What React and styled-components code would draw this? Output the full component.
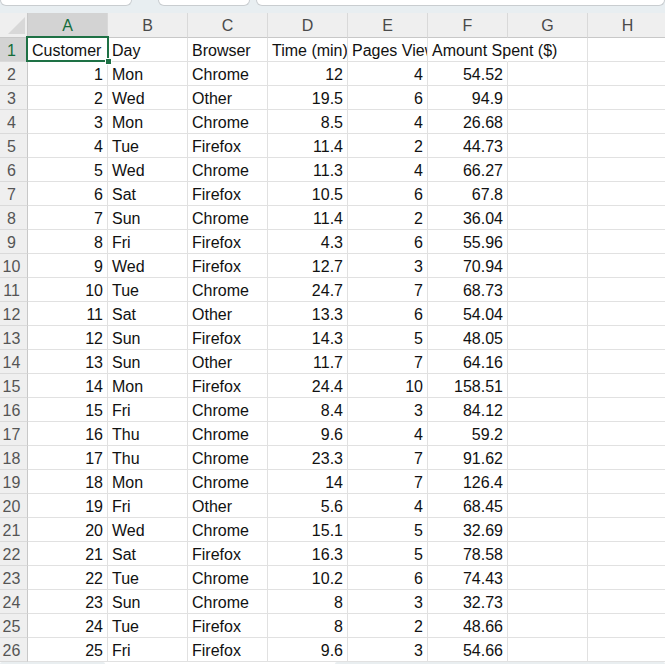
import styled, { createGlobalStyle } from "styled-components";

const GlobalStyle = createGlobalStyle`
  html, body {
    margin: 0;
    padding: 0;
    background: #ffffff;
  }
  body {
    font-family: "Liberation Sans", Arial, sans-serif;
    overflow: hidden;
  }
`;

const Page = styled.div`
  width: 665px;
  height: 664px;
  overflow: hidden;
  display: flex;
  flex-direction: column;
  background: #ffffff;
`;

const FormulaStrip = styled.div`
  height: 13px;
  flex: none;
  background: #e8eef1;
  display: flex;
  align-items: flex-start;
  gap: 6px;
`;

const StripBox = styled.div`
  width: ${(p) => p.w};
  margin-left: ${(p) => p.ml || "0"};
  flex: ${(p) => (p.grow ? "1" : "none")};
  height: 5px;
  background: #ffffff;
  border: 1px solid #c9cdd0;
  border-top: none;
  border-radius: 0 0 6px 6px;
`;

const Sheet = styled.div`
  display: grid;
  grid-template-columns: 28px repeat(8, 80px);
  grid-template-rows: 25px repeat(26, 24px);
  flex: none;
  font-size: 16px;
  color: #111;
`;

const Corner = styled.div`
  background: #efefef;
  border-right: 1px solid #c8c8c8;
  border-bottom: 1px solid #c8c8c8;
  display: flex;
  align-items: flex-end;
  justify-content: flex-end;
  padding: 0 2px 3px 0;
  box-sizing: border-box;
`;

const ColHeader = styled.div`
  box-sizing: border-box;
  background: ${(p) => (p.active ? "#d3d3d3" : "#efefef")};
  color: ${(p) => (p.active ? "#136c3a" : "#4a4a4a")};
  border-right: 1px solid #d9d9d9;
  border-bottom: 1px solid #c8c8c8;
  display: flex;
  align-items: center;
  justify-content: center;
  font-size: 16px;
  padding-top: 2px;
`;

const RowHeader = styled.div`
  box-sizing: border-box;
  background: ${(p) => (p.active ? "#d3d3d3" : "#efefef")};
  color: ${(p) => (p.active ? "#136c3a" : "#555555")};
  border-right: 1px solid #c8c8c8;
  border-bottom: 1px solid #dadada;
  display: flex;
  align-items: center;
  justify-content: center;
  padding: 2px 4px 0 0;
  font-size: 16px;
`;

const Cell = styled.div`
  box-sizing: border-box;
  position: relative;
  border-right: 1px solid ${(p) => (p.spill ? "transparent" : "#e1e1e1")};
  border-bottom: 1px solid #e1e1e1;
  padding: 2px 4px 0 4px;
  line-height: 21px;
  white-space: nowrap;
  overflow: ${(p) => (p.spill || p.selected ? "visible" : "hidden")};
  text-align: ${(p) => (p.num ? "right" : "left")};
  z-index: ${(p) => (p.spill || p.selected ? 1 : 0)};

  ${(p) =>
    p.selected &&
    `
    &::after {
      content: "";
      position: absolute;
      top: -2px;
      left: -2px;
      right: -2px;
      bottom: -1px;
      border: 2px solid #1e7145;
      pointer-events: none;
    }
    &::before {
      content: "";
      position: absolute;
      right: -5px;
      bottom: -4px;
      width: 5px;
      height: 5px;
      background: #1e7145;
      border: 1px solid #ffffff;
      z-index: 2;
    }
  `}
`;

const BottomStrip = styled.div`
  flex: 1;
  background: #ffffff;
  display: flex;
`;

const Track = styled.div`
  width: ${(p) => p.w};
  margin-left: ${(p) => p.ml || "0"};
  background: #e9eef0;
  border-radius: 4px 4px 0 0;
`;

const columns = ["A", "B", "C", "D", "E", "F", "G", "H"];

const headerRow = ["Customer", "Day", "Browser", "Time (min)", "Pages Viewed", "Amount Spent ($)"];

const data = [
  [1, "Mon", "Chrome", 12, 4, 54.52],
  [2, "Wed", "Other", 19.5, 6, 94.9],
  [3, "Mon", "Chrome", 8.5, 4, 26.68],
  [4, "Tue", "Firefox", 11.4, 2, 44.73],
  [5, "Wed", "Chrome", 11.3, 4, 66.27],
  [6, "Sat", "Firefox", 10.5, 6, 67.8],
  [7, "Sun", "Chrome", 11.4, 2, 36.04],
  [8, "Fri", "Firefox", 4.3, 6, 55.96],
  [9, "Wed", "Firefox", 12.7, 3, 70.94],
  [10, "Tue", "Chrome", 24.7, 7, 68.73],
  [11, "Sat", "Other", 13.3, 6, 54.04],
  [12, "Sun", "Firefox", 14.3, 5, 48.05],
  [13, "Sun", "Other", 11.7, 7, 64.16],
  [14, "Mon", "Firefox", 24.4, 10, 158.51],
  [15, "Fri", "Chrome", 8.4, 3, 84.12],
  [16, "Thu", "Chrome", 9.6, 4, 59.2],
  [17, "Thu", "Chrome", 23.3, 7, 91.62],
  [18, "Mon", "Chrome", 14, 7, 126.4],
  [19, "Fri", "Other", 5.6, 4, 68.45],
  [20, "Wed", "Chrome", 15.1, 5, 32.69],
  [21, "Sat", "Firefox", 16.3, 5, 78.58],
  [22, "Tue", "Chrome", 10.2, 6, 74.43],
  [23, "Sun", "Chrome", 8, 3, 32.73],
  [24, "Tue", "Firefox", 8, 2, 48.66],
  [25, "Fri", "Firefox", 9.6, 3, 54.66],
];

function CornerMark() {
  return (
    <svg width="17" height="17" viewBox="0 0 17 17">
      <polygon points="17,0 17,17 0,17" fill="#d8d8d8" />
    </svg>
  );
}

function Row({ n, row }) {
  return (
    <>
      <RowHeader>{n}</RowHeader>
      {columns.map((c, i) => {
        const v = row[i];
        return (
          <Cell key={c} num={typeof v === "number"}>
            {v === undefined ? "" : v}
          </Cell>
        );
      })}
    </>
  );
}

export default function App() {
  return (
    <Page>
      <GlobalStyle />
      <FormulaStrip>
        <StripBox w="130px" />
        <StripBox w="90px" ml="20px" />
        <StripBox grow />
      </FormulaStrip>
      <Sheet>
        <Corner>
          <CornerMark />
        </Corner>
        {columns.map((c) => (
          <ColHeader key={c} active={c === "A"}>
            {c}
          </ColHeader>
        ))}

        <RowHeader active>1</RowHeader>
        {columns.map((c, i) => (
          <Cell key={c} selected={i === 0} spill={i === 5}>
            {headerRow[i] || ""}
          </Cell>
        ))}

        {data.map((row, r) => (
          <Row key={r} n={r + 2} row={row} />
        ))}
      </Sheet>
      <BottomStrip>
        <Track w="105px" />
        <Track w="330px" ml="230px" />
      </BottomStrip>
    </Page>
  );
}
